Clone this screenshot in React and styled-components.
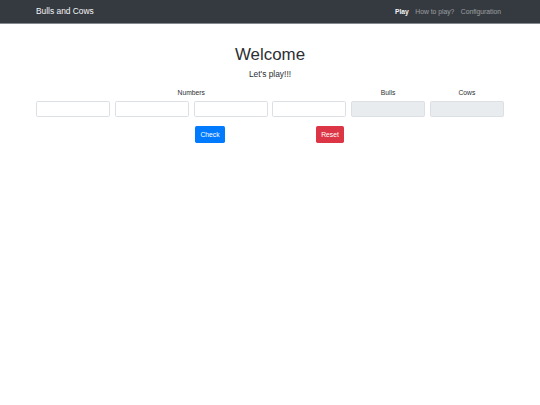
import styled, { createGlobalStyle } from "styled-components";

const GlobalStyle = createGlobalStyle`
  * {
    box-sizing: border-box;
  }
  body {
    margin: 0;
    background: #fff;
    color: #2b2f33;
    font-family: "Liberation Sans", Arial, sans-serif;
    font-size: 6.75px;
  }
`;

function App() {
  return (
    <>
      <GlobalStyle />
      <Navbar>
        <Brand>Bulls and Cows</Brand>
        <NavLinks>
          <NavLink active>Play</NavLink>
          <NavLink>How to play?</NavLink>
          <NavLink>Configuration</NavLink>
        </NavLinks>
      </Navbar>

      <Main>
        <Title>Welcome</Title>
        <Subtitle>Let's play!!!</Subtitle>

        <Board>
          <NumbersLabel>Numbers</NumbersLabel>
          <Label>Bulls</Label>
          <Label>Cows</Label>
          <Input />
          <Input />
          <Input />
          <Input />
          <Input disabled />
          <Input disabled />
        </Board>

        <Actions>
          <ActionCell>
            <Button color="#007bff">Check</Button>
          </ActionCell>
          <ActionCell>
            <Button color="#dc3545">Reset</Button>
          </ActionCell>
        </Actions>
      </Main>
    </>
  );
}

const Navbar = styled.nav`
  display: flex;
  align-items: center;
  justify-content: space-between;
  height: 24px;
  padding: 0 39px 0 36px;
  background-color: #343a40;
  border-bottom: 1px solid #85888c;
`;

const Brand = styled.span`
  color: #f4f4f5;
  font-size: 8.4px;
  line-height: 1;
  margin-top: -1px;
`;

const NavLinks = styled.div`
  display: flex;
  gap: 6.5px;
  margin-top: -1px;
`;

const NavLink = styled.span`
  font-size: 6.75px;
  color: ${(p) => (p.active ? "#f4f4f5" : "rgba(255, 255, 255, 0.5)")};
  font-weight: ${(p) => (p.active ? "bold" : "normal")};
`;

const Main = styled.main`
  width: 468px;
  margin: 0 auto;
  display: flex;
  flex-direction: column;
  align-items: center;
`;

const Title = styled.h1`
  margin: 21px 0 0;
  font-size: 16.9px;
  font-weight: 500;
  line-height: 1.2;
  color: #2b2f33;
`;

const Subtitle = styled.h5`
  margin: 4px 0 0;
  font-size: 8.4px;
  font-weight: 500;
  line-height: 1.2;
`;

const Board = styled.div`
  width: 100%;
  margin-top: 9px;
  display: grid;
  grid-template-columns: repeat(6, 1fr);
  column-gap: 4.6px;
  row-gap: 3px;
`;

const Label = styled.div`
  text-align: center;
  font-size: 6.75px;
  line-height: 1.5;
`;

const NumbersLabel = styled(Label)`
  grid-column: span 4;
`;

const Input = styled.input`
  width: 100%;
  height: 16px;
  border: 1px solid #dcdfe3;
  border-radius: 1.7px;
  background-color: ${(p) => (p.disabled ? "#e9ecef" : "#fff")};
  padding: 0 3px;
  font-size: 6.75px;
  outline: none;
`;

const Actions = styled.div`
  display: flex;
  margin-top: 9px;
`;

const ActionCell = styled.div`
  width: 120px;
  display: flex;
  justify-content: center;
`;

const Button = styled.button`
  height: 17px;
  padding: 0 5px;
  border: none;
  border-radius: 1.7px;
  background-color: ${(p) => p.color};
  color: #fff;
  font-family: inherit;
  font-size: 6.75px;
  cursor: pointer;
`;

export default App;
